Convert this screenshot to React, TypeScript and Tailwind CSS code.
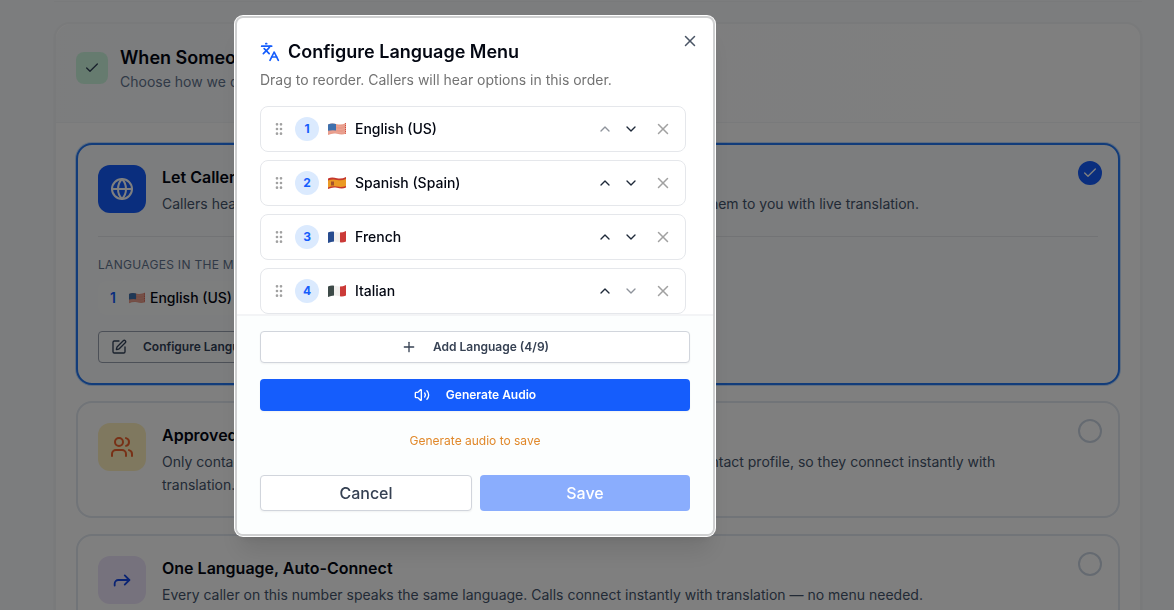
import React, { useState } from 'react';
import { Check, ChevronDown, ChevronUp, Forward, Globe, GripVertical, Languages, Plus, SquarePen, Users, Volume2, X } from 'lucide-react';

type Country = 'us' | 'es' | 'fr' | 'it';

const LANGUAGES: { name: string; flag: Country }[] = [
  { name: 'English (US)', flag: 'us' },
  { name: 'Spanish (Spain)', flag: 'es' },
  { name: 'French', flag: 'fr' },
  { name: 'Italian', flag: 'it' },
];

export default function App() {
  const [mode, setMode] = useState('menu');
  return (
    <div className="h-screen overflow-hidden bg-slate-50 font-['Inter',sans-serif] text-gray-950">
      <main className="pl-[54px] pr-8">
        <div className="h-0.5 border-b border-gray-100" />
        <section className="mt-5 rounded-2xl border-2 border-gray-100 bg-white shadow-xs">
          <header className="flex items-center gap-3 rounded-t-2xl border-b border-gray-100 bg-linear-to-r from-slate-50 to-white px-5 pt-5 pb-[30px]">
            <div className="flex size-8 items-center justify-center rounded-lg bg-[#cdf7de]">
              <Check size={16} className="text-slate-700" />
            </div>
            <div>
              <h2 className="text-lg leading-7 font-semibold">When Someone Calls</h2>
              <p className="text-sm text-slate-500">Choose how we determine the caller's language</p>
            </div>
          </header>
          <div className="space-y-4 p-5">
            <OptionCard
              value="menu"
              mode={mode}
              onPick={setMode}
              title="Let Callers Choose"
              text="Callers hear a short menu, press a number to choose their language, and connect them to you with live translation."
              icon={<Globe size={24} />}
              tile="bg-[#155dfc] text-white"
            >
              <div className="mt-5 border-t border-gray-200 pt-5">
                <p className="text-xs tracking-wide text-slate-500">LANGUAGES IN THE MENU</p>
                <div className="mt-2 flex">
                  <div className="flex h-[34px] items-center rounded-lg bg-white/40 px-3 text-sm font-medium">
                    <b className="w-[18px] font-semibold text-blue-600">1</b>
                    <Flag country="us" width={18} />
                    <span className="ml-1">English (US)</span>
                  </div>
                </div>
                <button className="mt-4 flex h-8 items-center gap-4 rounded-sm border border-gray-400 bg-white/40 px-3 text-xs font-semibold text-slate-700">
                  <SquarePen size={16} /> Configure Language Menu
                </button>
              </div>
            </OptionCard>
            <OptionCard
              value="approved"
              mode={mode}
              onPick={setMode}
              title="Approved Contacts Only"
              text="Only contacts you have approved can get through. Their language is set in each contact profile, so they connect instantly with translation."
              icon={<Users size={24} />}
              tile="bg-[#fef0bf] text-[#f0622d]"
            />
            <OptionCard
              value="single"
              mode={mode}
              onPick={setMode}
              title="One Language, Auto-Connect"
              text="Every caller on this number speaks the same language. Calls connect instantly with translation — no menu needed."
              icon={<Forward size={22} />}
              tile="bg-[#ede4fb] text-blue-700"
            />
          </div>
        </section>
      </main>

      <div className="fixed inset-0 flex items-start justify-center bg-black/50 pt-4 pr-[224px]">
        <LanguageDialog />
      </div>
    </div>
  );
}

function OptionCard({ value, mode, onPick, title, text, icon, tile, children }: any) {
  const active = mode === value;
  const id = `mode-${value}`;
  return (
    <div className={`relative rounded-2xl border-2 p-5 ${active ? 'border-[#2478f5] bg-slate-50 ring-1 ring-blue-200' : 'border-slate-200 bg-white'}`}>
      <div className="flex gap-4">
        <div className={`flex size-12 shrink-0 items-center justify-center rounded-xl ${tile}`}>{icon}</div>
        <div className="pr-14">
          <label htmlFor={id} className="block text-base font-semibold">{title}</label>
          <p className="mt-1 text-sm leading-relaxed text-slate-600">{text}</p>
        </div>
      </div>
      <div className="absolute top-4 right-4 size-6">
        <input
          id={id}
          type="radio"
          name="mode"
          checked={active}
          onChange={() => onPick(value)}
          className="block size-6 appearance-none rounded-full border-2 border-slate-300 checked:border-[#155dfc] checked:bg-[#155dfc]"
        />
        {active && <Check size={16} className="pointer-events-none absolute top-1 left-1 text-white" />}
      </div>
      {children}
    </div>
  );
}

function LanguageDialog() {
  return (
    <div role="dialog" aria-labelledby="dialog-title" className="relative w-[480px] overflow-hidden rounded-lg border-2 border-[#cfd0d1] bg-white shadow-xl ring-1 ring-white">
      <button aria-label="Close" className="absolute top-[11px] right-[11px] flex size-6 items-center justify-center text-gray-600">
        <X size={18} strokeWidth={2} />
      </button>
      <div className="px-[23px] pt-5">
        <h1 id="dialog-title" className="flex items-center gap-2 text-lg leading-7 font-semibold">
          <Languages size={20} className="text-blue-600" /> Configure Language Menu
        </h1>
        <p className="mt-1 text-sm text-neutral-500">Drag to reorder. Callers will hear options in this order.</p>
        <ul className="mt-4 space-y-2 pr-1">
          {LANGUAGES.map((lang, i) => (
            <LanguageRow key={lang.name} rank={i + 1} {...lang} first={i === 0} last={i === LANGUAGES.length - 1} />
          ))}
        </ul>
      </div>
      <div className="border-t-2 border-gray-100 bg-[#fcfefe] px-[23px] pt-[15px] pb-[23px]">
        <button className="flex h-8 w-full items-center justify-center gap-4 rounded-sm border border-gray-300 bg-white text-xs font-semibold text-gray-700 shadow-xs">
          <Plus size={16} /> Add Language (4/9)
        </button>
        <button className="mt-4 flex h-8 w-full items-center justify-center gap-4 rounded-sm bg-[#155dfc] text-xs font-semibold text-white shadow-xs">
          <Volume2 size={16} /> Generate Audio
        </button>
        <p className="mt-5 text-center text-xs leading-5 text-[#e1882a]">Generate audio to save</p>
        <div className="mt-6 flex gap-2">
          <button className="h-9 flex-1 rounded-sm border border-gray-300 bg-white text-base font-medium text-gray-700 shadow-xs">Cancel</button>
          <button disabled className="h-9 flex-1 rounded-sm bg-[#8aadfd] text-base font-medium text-white">Save</button>
        </div>
      </div>
    </div>
  );
}

function LanguageRow({ rank, name, flag, first, last }: any) {
  return (
    <li className="flex items-center gap-2 rounded-lg border border-gray-200 bg-white p-2.5">
      <GripVertical size={16} className="text-neutral-400" />
      <span className="flex size-6 items-center justify-center rounded-full bg-blue-100 text-xs font-bold text-blue-600">{rank}</span>
      <Flag country={flag} width={20} />
      <span className="flex-1 text-sm font-medium">{name}</span>
      <div className="flex gap-0.5 text-gray-800">
        <button disabled={first} aria-label={`Move ${name} up`} className="flex size-6 items-center justify-center disabled:opacity-50">
          <ChevronUp size={16} />
        </button>
        <button disabled={last} aria-label={`Move ${name} down`} className="flex size-6 items-center justify-center disabled:opacity-50">
          <ChevronDown size={16} />
        </button>
      </div>
      <button aria-label={`Remove ${name}`} className="flex size-6 items-center justify-center text-neutral-400">
        <X size={18} strokeWidth={2} />
      </button>
    </li>
  );
}

// waving flags, all cut from the same outline
function Flag({ country, width }: { country: Country; width: number }) {
  const outline = 'M1 2.5C4 1 7 1.5 10 2.2S16 2.5 19 1V11.5C16 13 13 12.5 10 11.8S4 11.5 1 13Z';
  const clip = `flag-${React.useId()}`;
  return (
    <svg width={width} height="14" viewBox="0 0 20 14" aria-hidden="true">
      <clipPath id={clip}>
        <path d={outline} />
      </clipPath>
      <g clipPath={`url(#${clip})`}>
        {country === 'us' && (
          <>
            <path d="M0 0h20v14H0z" fill="#e89a88" />
            <path d="M1 4.5q4.5-1.5 9-.3t9-1.2M1 7.5q4.5-1.5 9-.3t9-1.2M1 10.5q4.5-1.5 9-.3t9-1.2" stroke="#eba596" fill="none" />
            <path d="M18.5 1v12" stroke="#cf4a3c" strokeDasharray="1 1" />
            <path d="M0 0h9v8.5q-4-.8-9 .5z" fill="#3f70ad" />
          </>
        )}
        {country === 'es' && (
          <>
            <path d="M0 0h20v14H0z" fill="#c5372c" />
            <path d="M1 4.5q4.5-1.5 9-.5t9-1v7q-4.5 1.5-9 .5t-9 1z" fill="#eb9a24" />
            <path d="M4 5.5h3v4H4z" fill="#a5522b" />
          </>
        )}
        {(country === 'fr' || country === 'it') && (
          <>
            <path d="M0 0h7v14H0z" fill={country === 'fr' ? '#274b8e' : '#3d4a48'} />
            <path d="M7 0h6v14H7z" fill="#f1efed" />
            <path d="M13 0h7v14h-7z" fill="#cb3a38" />
          </>
        )}
      </g>
    </svg>
  );
}
